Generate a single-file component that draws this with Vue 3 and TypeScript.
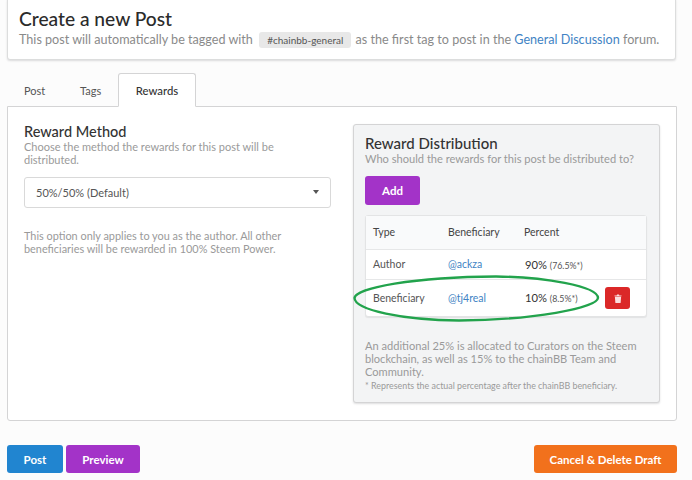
<script setup lang="ts">
interface Row {
  type: string
  name: string
  pct: string
  actual: string
  removable: boolean
}
const rows: Row[] = [
  { type: 'Author', name: '@ackza', pct: '90%', actual: '(76.5%*)', removable: false },
  { type: 'Beneficiary', name: '@tj4real', pct: '10%', actual: '(8.5%*)', removable: true },
]
const tabs = ['Post', 'Tags', 'Rewards']
</script>

<template>
  <div class="page">
    <header class="head">
      <h1>Create a new Post</h1>
      <p>
        This post will automatically be tagged with
        <span class="tag">#chainbb-general</span>
        as the first tag to post in the
        <a>General Discussion</a> forum.
      </p>
    </header>

    <nav class="tabs">
      <span v-for="t in tabs" :key="t" class="tab" :class="{ active: t === 'Rewards' }">{{ t }}</span>
    </nav>

    <section class="panel">
      <div class="left">
        <h2>Reward Method</h2>
        <p class="muted">Choose the method the rewards for this post will be distributed.</p>
        <div class="select">
          <span>50%/50% (Default)</span>
          <i class="caret"></i>
        </div>
        <p class="muted note">This option only applies to you as the author. All other beneficiaries will be rewarded in 100% Steem Power.</p>
      </div>

      <div class="box">
        <h2>Reward Distribution</h2>
        <p class="muted">Who should the rewards for this post be distributed to?</p>
        <button class="btn purple add">Add</button>
        <div class="table-wrap">
          <div class="row header">
            <span class="c1">Type</span>
            <span class="c2">Beneficiary</span>
            <span class="c3">Percent</span>
          </div>
          <div v-for="r in rows" :key="r.name" class="row" :class="{ tall: r.removable }">
            <span class="c1">{{ r.type }}</span>
            <a class="c2">{{ r.name }}</a>
            <span class="c3 pct">{{ r.pct }} <small>{{ r.actual }}</small></span>
            <button v-if="r.removable" class="del" aria-label="Delete">
              <svg width="8" height="9" viewBox="0 0 9 10">
                <path fill="#fff" fill-opacity=".85" d="M0.5 1.5H3L3.4 .6H5.6L6 1.5H8.5V2.5H.5ZM1 3H8L7.5 9.4A.6.6 0 0 1 6.9 10H2.1A.6.6 0 0 1 1.5 9.4Z" />
              </svg>
            </button>
          </div>
          <svg class="ellipse" width="248" height="50" viewBox="0 0 248 50">
            <path fill="none" stroke="#22a34c" stroke-width="2.4" d="M1.5 24C3 14 60 3 143 2.5C190 3 245 12 245 24C244 34 180 46 106 46.5C50 46 2 36 1.5 24Z" />
          </svg>
        </div>
        <p class="muted extra">An additional 25% is allocated to Curators on the Steem blockchain, as well as 15% to the chainBB Team and Community.</p>
        <p class="muted fine">* Represents the actual percentage after the chainBB beneficiary.</p>
      </div>
    </section>

    <footer class="foot">
      <button class="btn blue">Post</button>
      <button class="btn purple">Preview</button>
      <button class="btn orange cancel">Cancel &amp; Delete Draft</button>
    </footer>
  </div>
</template>

<style>
html, body { background: #fcfcfc; }
</style>

<style scoped>
* { box-sizing: border-box; }
.page {
  width: 692px;
  height: 480px;
  overflow: hidden;
  padding: 0 15px 0 7px;
  font-family: Lato, sans-serif;
  font-size: 13px;
  line-height: 13px;
  color: #333;
}
.head {
  height: 61px;
  margin-top: -1px;
  margin-right: 1px;
  padding: 10px 11px 0;
  background: #fff;
  border: 1px solid #dcdddd;
  border-radius: 0 0 3px 3px;
  box-shadow: 0 1px 2px rgba(34, 36, 38, .15);
}
h1 {
  margin: 0;
  font-size: 19.2px;
  line-height: 18px;
  font-weight: 500;
  color: #2b2b2b;
}
.head p {
  margin: 2px 0 0;
  font-size: 12.6px;
  line-height: 20px;
  color: #8a8a8a;
  white-space: nowrap;
}
.tag {
  display: inline-block;
  margin: 0 1px 0 3px;
  padding: 0 8px;
  height: 16px;
  line-height: 16px;
  font-size: 10px;
  color: #555;
  background: #e8e8e8;
  border-radius: 3px;
  vertical-align: 0;
}
a { color: #4183c4; }
.tabs {
  display: flex;
  margin-top: 13px;
  height: 33px;
  position: relative;
  z-index: 1;
}
.tab {
  height: 34px;
  padding: 0 16px;
  line-height: 34px;
  font-size: 11px;
  color: #555;
  border: 1px solid transparent;
}
.tab:first-child { width: 56px; }
.tab:nth-child(2) { width: 55px; }
.tab.active {
  width: 78px;
  padding: 0;
  text-align: center;
  color: #333;
  font-size: 11.3px;
  font-weight: 500;
  background: #fff;
  border-color: #d4d4d5;
  border-bottom-color: #fff;
  border-radius: 3px 3px 0 0;
}
.panel {
  display: flex;
  justify-content: space-between;
  height: 315px;
  padding: 17px 16px 0 16px;
  background: #fff;
  border: 1px solid #d4d4d5;
  border-radius: 0 0 3px 3px;
}
h2 {
  margin: 0;
  font-size: 14.5px;
  line-height: 15px;
  font-weight: 500;
  color: #333;
}
.muted { margin: 0; color: #9a9a9a; font-size: 11px; line-height: 13px; }
.left { width: 307px; }
.left > .muted:first-of-type { margin-top: 1px; }
.select {
  display: flex;
  align-items: center;
  justify-content: space-between;
  height: 31px;
  margin-top: 11px;
  padding: 0 11px;
  font-size: 11px;
  color: #555;
  border: 1px solid #d9d9d9;
  border-radius: 3px;
}
.caret {
  width: 0;
  height: 0;
  margin-top: -2px;
  border: 3px solid transparent;
  border-top: 4px solid #555;
  border-bottom: 0;
}
.note { margin-top: 21px; font-size: 10.9px; }
.box {
  width: 307px;
  height: 279px;
  padding: 11px 11px 0;
  background: #f3f4f5;
  border: 1px solid #d4d4d5;
  border-radius: 3px;
  box-shadow: 0 1px 2px rgba(34, 36, 38, .15);
}
.box h2 { font-size: 15px; }
.box > .muted:first-of-type { margin-top: 1px; font-size: 11.1px; }
.btn {
  border: 0;
  border-radius: 3px;
  color: #fff;
  font-family: Lato, sans-serif;
  font-weight: 700;
  font-size: 11.5px;
  height: 28px;
  padding: 0;
}
.add { display: block; width: 55px; height: 29px; margin-top: 11px; }
.purple { background: #a333c8; }
.blue { background: #2185d0; }
.orange { background: #f2711c; }
.table-wrap {
  position: relative;
  width: 282px;
  height: 102px;
  margin-top: 10px;
  background: #fff;
  border: 1px solid #e3e4e5;
  border-radius: 3px;
  box-shadow: 0 1px 1px rgba(34, 36, 38, .08);
}
.row {
  display: flex;
  align-items: center;
  height: 30px;
  padding-left: 7px;
  font-size: 10.5px;
  color: #555;
  border-top: 1px solid #e6e7e8;
}
.row.header { height: 33px; border-top: 0; background: #f9fafb; color: #444; }
.row.tall { height: 37px; }
.c1 { width: 75px; }
.c2 { width: 76px; }
.c3 { width: 81px; }
.pct { font-size: 11.2px; color: #333; white-space: nowrap; padding-left: 1px; }
small { font-size: 8.8px; color: #555; }
.del {
  display: flex;
  align-items: center;
  justify-content: center;
  width: 25px;
  height: 22px;
  border: 0;
  padding: 0;
  border-radius: 3px;
  background: #db2828;
}
.ellipse {
  position: absolute;
  left: -13px;
  top: 58px;
  pointer-events: none;
}
.extra { margin-top: 22px; font-size: 11.1px; }
.fine { margin-top: 2px; font-size: 8.9px; line-height: 12px; }
.foot {
  display: flex;
  gap: 3px;
  margin-top: 24px;
}
.foot .blue { width: 56px; }
.foot .purple { width: 74px; }
.cancel { width: 143px; margin-left: auto; }
</style>
